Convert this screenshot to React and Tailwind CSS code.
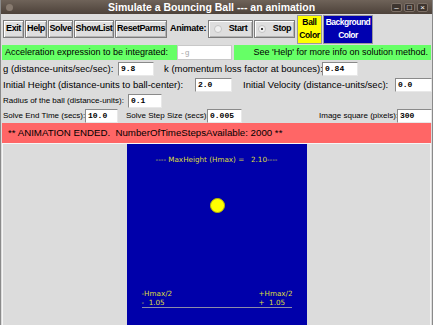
import React from 'react';

const Btn = ({ children, w, className = "" }) => (
  <div className={`${w} h-[18px] flex items-center justify-center bg-[#dedede] border border-[#7c7c7c] shadow-[inset_1px_1px_0_#ffffff,inset_-1px_-1px_0_#b4b4b4] font-bold text-[9px] tracking-[-0.4px] text-black whitespace-nowrap ${className}`}>
    {children}
  </div>
);

const Entry = ({ value, w, className = "" }) => (
  <div className={`${w} h-[14px] bg-white border border-t-[#8a8a8a] border-l-[#8a8a8a] border-b-[#e8e8e8] border-r-[#e8e8e8] pl-[2px] flex items-center text-[8px] font-bold font-['Liberation_Mono',monospace] tracking-normal text-black ${className}`}>
    {value}
  </div>
);

const Radio = ({ label, checked, w, className = "" }) => (
  <Btn w={w} className={`gap-[7px] ${className}`}>
    <span className="w-[8px] h-[8px] rounded-full border border-[#c4c4c4] bg-[#f0f0f0] flex items-center justify-center">
      {checked && <span className="w-[2px] h-[2px] rounded-full bg-black" />}
    </span>
    <span>{label}</span>
  </Btn>
);

export default function App() {
  return (
    <div className="w-[433px] h-[325px] overflow-hidden bg-[#dcdcdc] font-['Liberation_Sans',sans-serif] text-[9.5px] text-black flex flex-col border-l border-r border-[#8a8a8a]">
      {/* title bar */}
      <div className="h-[14px] shrink-0 bg-gradient-to-b from-[#6f6359] to-[#4d423a] flex items-center">
        <div className="w-[7px] h-[7px] rounded-full bg-[#877a6f] ml-[5px]" />
        <div className="ml-[95px] text-white font-bold text-[10.5px] leading-[14px] whitespace-nowrap">
          Simulate a Bouncing Ball --- an animation
        </div>
        <div className="ml-auto mr-[4px] flex gap-[2px]">
          {['–', '□', '×'].map((c) => (
            <div key={c} className="w-[11px] h-[9px] rounded-[2px] bg-[#3e352f] border border-[#7d7066] text-white text-[8px] leading-[7px] text-center">
              {c}
            </div>
          ))}
        </div>
      </div>

      {/* button row */}
      <div className="flex items-center h-[30px] pl-[2px] shrink-0">
        <Btn w="w-[21px]">Exit</Btn>
        <Btn w="w-[22px]" className="ml-[1px]">Help</Btn>
        <Btn w="w-[25px]" className="ml-[1px]">Solve</Btn>
        <Btn w="w-[40px]" className="ml-[1px]">ShowList</Btn>
        <Btn w="w-[52px]" className="ml-[1px]">ResetParms</Btn>
        <span className="w-[41px] font-bold text-[9px] tracking-[-0.3px] pl-[3px] whitespace-nowrap">Animate:</span>
        <Radio w="w-[45px]" label="Start" />
        <Radio w="w-[41px]" label="Stop" checked className="ml-[1px]" />
        <div className="ml-[2px] h-[29px] w-[25px] bg-[#ffff00] border border-[#9a9a9a] flex flex-col items-center justify-center font-bold text-[8.5px] tracking-[-0.3px] leading-[13px]">
          <span>Ball</span>
          <span>Color</span>
        </div>
        <div className="ml-[1px] h-[29px] w-[50px] bg-[#0000b0] border border-[#9a9a9a] flex flex-col items-center justify-center font-bold text-[8.5px] tracking-[-0.5px] leading-[13px] text-white">
          <span>Background</span>
          <span>Color</span>
        </div>
      </div>

      {/* expression row */}
      <div className="flex items-center h-[15px] mt-[1px] ml-[1px] shrink-0 whitespace-nowrap">
        <div className="h-full bg-[#66ff66] pl-[3px] flex items-center text-[9px] w-[175px]">
          Acceleration expression to be integrated:
        </div>
        <div className="h-[15px] w-[55px] bg-white border border-[#c8c8c8] pl-[2px] text-[#a8a8a8] text-[8px] flex items-center font-['Liberation_Mono',monospace]">-g</div>
        <div className="h-full bg-[#66ff66] w-[197px] ml-[2px] flex items-center justify-end pr-[3px] text-[9px]">
          See 'Help' for more info on solution method.
        </div>
      </div>

      {/* g / k row */}
      <div className="flex items-center h-[16px] mt-[1px] pl-[2px] shrink-0 whitespace-nowrap">
        <span className="w-[115px]">g (distance-units/sec/sec):</span>
        <Entry value="9.8" w="w-[36px]" />
        <span className="ml-[10px] w-[158px]">k (momentum loss factor at bounces):</span>
        <Entry value="0.84" w="w-[36px]" />
      </div>

      {/* height / velocity row */}
      <div className="flex items-center h-[16px] pl-[2px] shrink-0 whitespace-nowrap">
        <span className="w-[192px]">Initial Height (distance-units to ball-center):</span>
        <Entry value="2.0" w="w-[37px]" />
        <span className="ml-[11px] w-[152px]">Initial Velocity (distance-units/sec):</span>
        <Entry value="0.0" w="w-[37px]" />
      </div>

      {/* radius row */}
      <div className="flex items-center h-[15px] pl-[2px] shrink-0 text-[8px] whitespace-nowrap">
        <span className="w-[125px]">Radius of the ball (distance-units):</span>
        <Entry value="0.1" w="w-[34px]" />
      </div>

      {/* solve row */}
      <div className="flex items-center h-[15px] pl-[2px] shrink-0 text-[8px] whitespace-nowrap">
        <span className="w-[82px]">Solve End Time (secs):</span>
        <Entry value="10.0" w="w-[33px]" />
        <span className="ml-[8px] w-[81px]">Solve Step Size (secs):</span>
        <Entry value="0.005" w="w-[35px]" />
        <span className="ml-[77px] w-[78px]">Image square (pixels):</span>
        <Entry value="300" w="w-[35px]" />
      </div>

      {/* status bar */}
      <div className="h-[20px] mx-[1px] shrink-0 bg-[#ff6666] flex items-center pl-[6px] text-[9.7px] whitespace-pre">
        ** ANIMATION ENDED.  NumberOfTimeStepsAvailable: 2000 **
      </div>

      {/* canvas frame */}
      <div className="flex-1 mx-[1px] border-l border-r border-t border-[#f6f6f6] flex justify-center">
        <div className="w-[180px] h-full bg-[#0000aa] relative font-['DejaVu_Sans',sans-serif] text-[#dede3a] text-[7.2px]">
          <div className="absolute top-[11px] left-0 right-0 text-center whitespace-pre">---- MaxHeight (Hmax) =   2.10----</div>
          <div className="absolute left-[83px] top-[54px] w-[15px] h-[15px] rounded-full bg-[#ffff00] border border-[#b8b800]" />
          <div className="absolute left-[15px] top-[145px] leading-[9px] whitespace-pre">
            <div>-Hmax/2</div>
            <div>-  1.05</div>
          </div>
          <div className="absolute left-[132px] top-[145px] leading-[9px] whitespace-pre">
            <div>+Hmax/2</div>
            <div>+  1.05</div>
          </div>
          <div className="absolute left-[15px] top-[163px] w-[150px] h-[1px] bg-[#8c8ca8]" />
        </div>
      </div>
    </div>
  );
}
